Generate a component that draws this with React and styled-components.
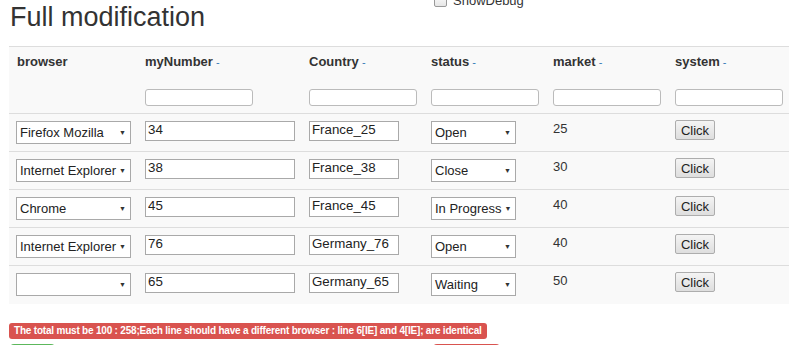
import styled, { createGlobalStyle } from 'styled-components'

const GlobalStyle = createGlobalStyle`
    html, body {
        margin: 0;
        padding: 0;
        background: #fff;
        overflow: hidden;
    }
    body {
        font-family: 'Liberation Sans', Arial, sans-serif;
        color: #333;
        font-size: 13px;
    }
`

const rows = [
    { browser: 'Firefox Mozilla', num: '34', country: 'France_25', status: 'Open', market: '25' },
    { browser: 'Internet Explorer', num: '38', country: 'France_38', status: 'Close', market: '30' },
    { browser: 'Chrome', num: '45', country: 'France_45', status: 'In Progress', market: '40' },
    { browser: 'Internet Explorer', num: '76', country: 'Germany_76', status: 'Open', market: '40' },
    { browser: '', num: '65', country: 'Germany_65', status: 'Waiting', market: '50' },
]

const columns = [
    { title: 'browser', width: 128, sort: false },
    { title: 'myNumber', width: 164, sort: true },
    { title: 'Country', width: 122, sort: true },
    { title: 'status', width: 122, sort: true },
    { title: 'market', width: 122, sort: true },
    { title: 'system', width: 130, sort: true },
]

const App = () => {
    return (
        <>
            <GlobalStyle />
            <Page>
                <TopBar>
                    <Title>Full modification</Title>
                    <DebugLabel>
                        <Check />
                        ShowDebug
                    </DebugLabel>
                </TopBar>
                <Table>
                    <colgroup>
                        {columns.map((c) => (
                            <col key={c.title} style={{ width: c.width }} />
                        ))}
                    </colgroup>
                    <thead>
                        <HeadRow>
                            {columns.map((c) => (
                                <Th key={c.title}>
                                    {c.title}
                                    {c.sort && <Sort> -</Sort>}
                                </Th>
                            ))}
                        </HeadRow>
                        <FilterRow>
                            {columns.map((c, i) => (
                                <FilterCell key={c.title}>
                                    {i > 0 && <FilterInput />}
                                </FilterCell>
                            ))}
                        </FilterRow>
                    </thead>
                    <tbody>
                        {rows.map((r, i) => (
                            <Row key={i}>
                                <Td>
                                    <Select $w={115}>
                                        <span>{r.browser}</span>
                                        <Arrow>▼</Arrow>
                                    </Select>
                                </Td>
                                <Td>
                                    <TextBox $w={150} defaultValue={r.num} />
                                </Td>
                                <Td>
                                    <TextBox $w={90} defaultValue={r.country} />
                                </Td>
                                <Td>
                                    <Select $w={85}>
                                        <span>{r.status}</span>
                                        <Arrow>▼</Arrow>
                                    </Select>
                                </Td>
                                <Td>
                                    <Market>{r.market}</Market>
                                </Td>
                                <Td>
                                    <ClickButton>Click</ClickButton>
                                </Td>
                            </Row>
                        ))}
                    </tbody>
                </Table>
                <ErrorLabel>
                    The total must be 100 : 258;Each line should have a different browser : line 6[IE] and 4[IE]; are identical
                </ErrorLabel>
                <Actions>
                    <ActionButton $color="#5cb85c" $w={45} />
                    <ActionButton $color="#d9534f" $w={67} />
                </Actions>
            </Page>
        </>
    )
}

export default App

const Page = styled.div`
    padding-left: 9px;
    width: 800px;
`
const TopBar = styled.div`
    display: flex;
    align-items: flex-start;
    height: 46px;
`
const Title = styled.h1`
    margin: 2px 0 0 1px;
    width: 424px;
    font-size: 27px;
    font-weight: normal;
    line-height: 30px;
    color: #333;
`
const DebugLabel = styled.label`
    display: flex;
    align-items: center;
    gap: 6px;
    margin-top: -7px;
    font-size: 13px;
    color: #333;
`
const Check = styled.span`
    display: inline-block;
    width: 11px;
    height: 11px;
    border: 1px solid #999;
    border-radius: 2px;
    background: linear-gradient(#fdfdfd, #e6e6e6);
`
const Table = styled.table`
    border-collapse: collapse;
    table-layout: fixed;
    width: 788px;
    background: #f9f9f9;
`
const HeadRow = styled.tr`
    border-top: 1px solid #ddd;
    height: 33px;
`
const Th = styled.th`
    text-align: left;
    padding: 6px 8px 0;
    vertical-align: top;
    font-size: 13px;
    font-weight: bold;
    color: #333;
    line-height: 18px;
`
const Sort = styled.span`
    font-weight: normal;
    color: #337ab7;
    font-size: 11px;
`
const FilterRow = styled.tr`
    height: 34px;
`
const FilterCell = styled.td`
    padding: 8px 8px 0;
    vertical-align: top;
`
const FilterInput = styled.input`
    display: block;
    box-sizing: border-box;
    width: 108px;
    height: 17px;
    margin-top: 1px;
    border: 1px solid #bbb;
    border-radius: 3px;
    background: #fff;
`
const Row = styled.tr`
    border-top: 1px solid #ddd;
    height: 38px;
`
const Td = styled.td`
    padding: 7px 8px 0 7px;
    vertical-align: top;
    &:nth-child(n + 2) {
        padding-left: 8px;
    }
`
const Select = styled.div`
    box-sizing: border-box;
    width: ${(p) => p.$w}px;
    height: 23px;
    border: 1px solid #a9a9a9;
    background: #fff;
    display: flex;
    align-items: center;
    justify-content: space-between;
    padding: 0 4px 0 3px;
    font-size: 13px;
    color: #222;
    white-space: nowrap;
    overflow: hidden;
`
const Arrow = styled.span`
    font-size: 7px;
    color: #333;
    margin-left: 3px;
`
const TextBox = styled.input`
    display: block;
    box-sizing: border-box;
    width: ${(p) => p.$w}px;
    height: 20px;
    border: 1px solid #a9a9a9;
    padding: 0 2px 3px;
    font-family: 'Liberation Sans', Arial, sans-serif;
    font-size: 13.3px;
    color: #222;
    background: #fff;
    line-height: 15px;
`
const Market = styled.div`
    padding-top: 0;
    font-size: 13px;
    color: #333;
    line-height: 15px;
`
const ClickButton = styled.button`
    box-sizing: border-box;
    width: 40px;
    height: 20px;
    margin-top: -1px;
    padding: 0;
    border: 1px solid #adadad;
    border-radius: 2px;
    background: linear-gradient(#f4f4f4, #dedede);
    font-family: 'Liberation Sans', Arial, sans-serif;
    font-size: 13px;
    color: #222;
`
const ErrorLabel = styled.div`
    display: inline-block;
    margin-top: 19px;
    background: #d9534f;
    color: #fff;
    font-weight: bold;
    font-size: 10px;
    letter-spacing: -0.2px;
    line-height: 12px;
    padding: 2px 5px 2px 5px;
    border-radius: 3px;
    white-space: nowrap;
`
const Actions = styled.div`
    display: flex;
    gap: 378px;
    margin-top: 5px;
    padding-left: 1px;
`
const ActionButton = styled.div`
    width: ${(p) => p.$w}px;
    height: 30px;
    background: ${(p) => p.$color};
    border-radius: 4px;
`
